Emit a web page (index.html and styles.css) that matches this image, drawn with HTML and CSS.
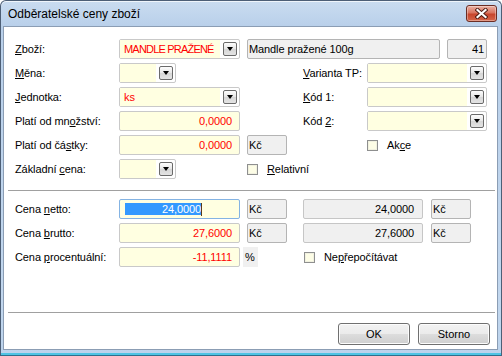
FILE: index.html
```html
<!DOCTYPE html>
<html lang="cs">
<head>
    <meta charset="UTF-8">
    <title>Odběratelské ceny zboží</title>
    <link rel="stylesheet" href="styles.css">
</head>
<body>
    <div class="window">
        <div class="titlebar">
            <span class="title">Odběratelské ceny zboží</span>
            <button class="close" aria-label="Zavřít">
                <svg width="13" height="11" viewBox="0 0 13 11">
                    <path d="M2.5 2 L10.5 9 M10.5 2 L2.5 9" stroke="#4b1a12" stroke-width="4" stroke-linecap="square"/>
                    <path d="M2.5 2 L10.5 9 M10.5 2 L2.5 9" stroke="#fff" stroke-width="2.2" stroke-linecap="square"/>
                </svg>
            </button>
        </div>

        <div class="client">
            <!-- horni cast: zbozi a parametry -->
            <div class="section top">
                <div class="row">
                    <label class="lbl"><u>Z</u>boží:</label>
                    <div class="combo long"><span class="val red caps">MANDLE PRAŽENÉ</span><span class="drop"></span></div>
                    <div class="box gray name">Mandle pražené 100g</div>
                    <div class="box gray num code">41</div>
                </div>
                <div class="row">
                    <label class="lbl"><u>M</u>ěna:</label>
                    <div class="combo short"><span class="val"></span><span class="drop"></span></div>
                    <label class="lbl side"><u>V</u>arianta TP:</label>
                    <div class="combo wide"><span class="val"></span><span class="drop"></span></div>
                </div>
                <div class="row">
                    <label class="lbl"><u>J</u>ednotka:</label>
                    <div class="combo long"><span class="val red">ks</span><span class="drop"></span></div>
                    <label class="lbl side"><u>K</u>ód 1:</label>
                    <div class="combo wide"><span class="val"></span><span class="drop"></span></div>
                </div>
                <div class="row">
                    <label class="lbl">Platí od mn<u>o</u>žství:</label>
                    <div class="box input num red long">0,0000</div>
                    <label class="lbl side">Kód <u>2</u>:</label>
                    <div class="combo wide"><span class="val"></span><span class="drop"></span></div>
                </div>
                <div class="row">
                    <label class="lbl">Platí od čá<u>s</u>tky:</label>
                    <div class="box input num red long">0,0000</div>
                    <div class="box gray cur">Kč</div>
                    <label class="check akce"><span class="cb"></span><span>Ak<u>c</u>e</span></label>
                </div>
                <div class="row">
                    <label class="lbl">Základní <u>c</u>ena:</label>
                    <div class="combo short"><span class="val"></span><span class="drop"></span></div>
                    <label class="check rel"><span class="cb"></span><span><u>R</u>elativní</span></label>
                </div>
            </div>

            <div class="sep"></div>

            <!-- dolni cast: ceny -->
            <div class="section bottom">
                <div class="row">
                    <label class="lbl">Cena <u>n</u>etto:</label>
                    <div class="box input focus"><span class="sel">24,0000</span><span class="caret"></span></div>
                    <div class="box gray cur">Kč</div>
                    <div class="box gray num price">24,0000</div>
                    <div class="box gray cur2">Kč</div>
                </div>
                <div class="row">
                    <label class="lbl">Cena <u>b</u>rutto:</label>
                    <div class="box input num red">27,6000</div>
                    <div class="box gray cur">Kč</div>
                    <div class="box gray num price">27,6000</div>
                    <div class="box gray cur2">Kč</div>
                </div>
                <div class="row">
                    <label class="lbl">Cena <u>p</u>rocentuální:</label>
                    <div class="box input num red">-11,1111</div>
                    <div class="pct">%</div>
                    <label class="check noprep"><span class="cb"></span><span>Ne<u>p</u>řepočítávat</span></label>
                </div>
            </div>

            <div class="footer">
                <button class="btn">OK</button>
                <button class="btn">Storno</button>
            </div>
        </div>
    </div>
</body>
</html>
```

FILE: styles.css
```css
* {
    box-sizing: border-box;
}
body {
    margin: 0;
    font-family: "Liberation Sans", Arial, sans-serif;
    font-size: 11px;
    letter-spacing: -0.1px;
    color: #000;
    background: #fff;
}
.window {
    width: 502px;
    height: 356px;
    display: flex;
    flex-direction: column;
    border: 1px solid #4d5f76;
    border-bottom-color: #2d6f8c;
    border-radius: 6px 6px 0 0;
    background: linear-gradient(#cadcf0, #b9d0ea 25px, #c2d7ee 300px, #bcd3ec);
    box-shadow: inset 0 1px 0 rgba(255, 255, 255, 0.7), inset 0 -2px 0 #4ec4e4;
}
.titlebar {
    height: 25px;
    display: flex;
    justify-content: space-between;
    padding: 0 4px 0 7px;
}
.title {
    font-size: 12px;
    letter-spacing: 0;
    line-height: 25px;
    margin-top: 1px;
}
.close {
    width: 31px;
    height: 17px;
    margin-top: 4px;
    padding: 0;
    border: 1px solid #6b2d24;
    border-radius: 3px;
    background: linear-gradient(#eab1a4, #d9745f 45%, #c7452c 55%, #d5664a);
    box-shadow: inset 0 0 0 1px rgba(255, 255, 255, 0.35);
    display: flex;
    align-items: center;
    justify-content: center;
}
.client {
    flex: 1;
    margin: 0 3px 5px 2px;
    background: #fff;
    border: 1px solid #8b9db4;
    display: flex;
    flex-direction: column;
}

/* sekce formulare */
.section {
    display: flex;
    flex-direction: column;
    gap: 4px;
    padding-left: 11px;
}
.section.top {
    margin-top: 12px;
}
.section.bottom {
    margin-top: 8px;
}
.row {
    display: grid;
    grid-template-rows: 20px;
    align-items: center;
}
.top .row {
    grid-template-columns: 104px 57px 64px 7px 40px 16px 64px 73px 7px 40px;
}
.bottom .row {
    grid-template-columns: 104px 121px 3px 4px 11px 29px 16px 120px 8px 40px;
}
.lbl {
    grid-column: 1;
    white-space: nowrap;
}
.top .lbl.side {
    grid-column: 7;
}
.top .long {
    grid-column: 2 / 4;
}
.top .short {
    grid-column: 2;
}
.top .wide {
    grid-column: 8 / 11;
}
.top .name {
    grid-column: 5 / 9;
}
.top .code {
    grid-column: 10;
}
.top .cur {
    grid-column: 5;
}
.top .akce {
    grid-column: 8;
}
.top .rel {
    grid-column: 5 / 9;
}
.bottom .input {
    grid-column: 2;
}
.bottom .cur {
    grid-column: 5 / 7;
}
.bottom .price {
    grid-column: 8;
}
.bottom .cur2 {
    grid-column: 10;
}
.bottom .pct {
    grid-column: 4 / 6;
}
.bottom .noprep {
    grid-column: 8 / 11;
    margin-left: 1px;
}

/* pole */
.box {
    height: 20px;
    display: flex;
    align-items: center;
    border: 1px solid #c9c9c9;
    border-radius: 2px;
    padding: 0 1px;
    white-space: nowrap;
    overflow: hidden;
}
.box.input {
    background: #ffffe1;
    padding: 0 7px 0 4px;
}
.box.gray {
    background: #f0f0f0;
    border-color: #b4b4b4;
}
.box.num {
    justify-content: flex-end;
}
.box.gray.num {
    padding-right: 2px;
}
.box.gray.price {
    border-color: #c6c6c6;
    padding-right: 8px;
}
.red {
    color: #f00;
}
.box.focus {
    border-color: #84b3e3;
    padding-left: 5px;
}
.sel {
    width: 76px;
    height: 12px;
    line-height: 12px;
    text-align: right;
    background: #3399ff;
    color: #fff;
}
.caret {
    width: 1px;
    height: 13px;
    background: #5a3a1a;
}
.combo {
    height: 20px;
    display: flex;
    align-items: center;
    border: 1px solid #c9c9c9;
    border-radius: 2px;
    background: #fff;
    padding-right: 2px;
}
.combo .val {
    flex: 1;
    height: 100%;
    background: #ffffe1;
    padding-left: 4px;
    line-height: 18px;
    margin-right: 3px;
    white-space: nowrap;
    overflow: hidden;
}
.combo .val.caps {
    letter-spacing: -0.8px;
}
.drop {
    flex: none;
    width: 14px;
    height: 14px;
    border: 1px solid #6a6a6a;
    border-radius: 2px;
    background: linear-gradient(#fdfdfd, #e6e6e6 50%, #d6d6d6 51%, #e4e4e4);
    position: relative;
}
.drop::after {
    content: "";
    position: absolute;
    left: 3px;
    top: 4px;
    border-left: 3.5px solid transparent;
    border-right: 3.5px solid transparent;
    border-top: 4px solid #000;
}
.pct {
    height: 20px;
    line-height: 20px;
    background: #f0f0f0;
    padding-left: 2px;
}

/* zaskrtavatka */
.check {
    display: flex;
    align-items: center;
    gap: 9px;
    white-space: nowrap;
}
.cb {
    flex: none;
    width: 11px;
    height: 11px;
    border: 1px solid #8e8f8f;
    background: #fdfde6;
    box-shadow: inset 0 0 0 1px #f1f1e0;
}

.sep {
    height: 1px;
    margin: 11px 2px 0 4px;
    background: #a0a0a0;
}
.footer {
    margin: auto 2px 0 4px;
    border-top: 1px solid #a0a0a0;
    padding: 10px 5px 4px 0;
    display: flex;
    justify-content: flex-end;
    gap: 8px;
}
.btn {
    width: 72px;
    height: 22px;
    font-family: inherit;
    font-size: 11px;
    border: 1px solid #707070;
    border-radius: 3px;
    background: linear-gradient(#f2f2f2, #ebebeb 50%, #dddddd 51%, #cfcfcf);
    box-shadow: inset 0 0 0 1px #fcfcfc;
    padding: 0;
}
```
